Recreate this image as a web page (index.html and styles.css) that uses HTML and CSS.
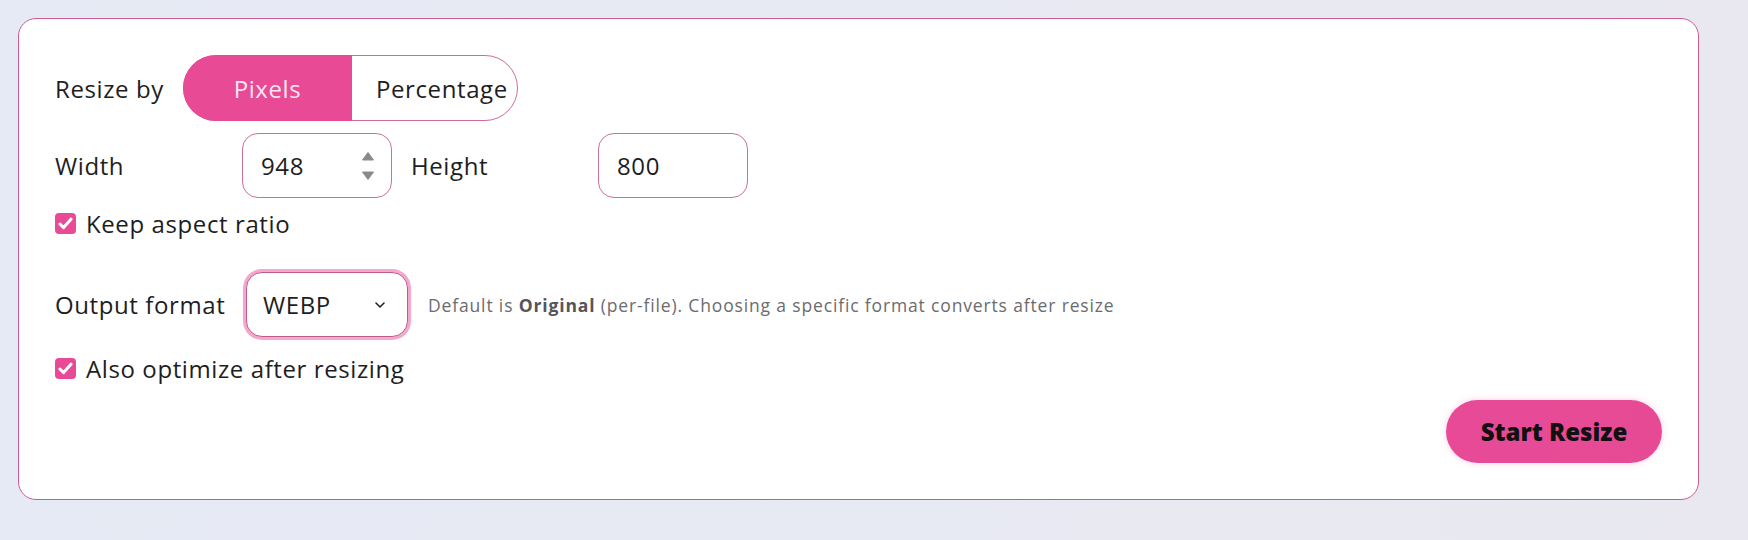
FILE: index.html
```html
<!DOCTYPE html>
<html lang="en">
<head>
    <meta charset="UTF-8">
    <meta name="viewport" content="width=device-width, initial-scale=1.0">
    <title>Resize</title>
    <link rel="stylesheet" href="styles.css">
</head>
<body>
    <div class="card">
        <div class="row">
            <span class="label label-short">Resize by</span>
            <div class="toggle">
                <button class="seg seg-active">Pixels</button>
                <button class="seg seg-pct">Percentage</button>
            </div>
        </div>

        <div class="row row-size">
            <label class="label" for="width">Width</label>
            <div class="field">
                <input type="text" id="width" value="948" />
                <svg class="spin" width="14" height="30" viewBox="0 0 14 30">
                    <path d="M7 1.5 L12.5 9 L1.5 9 Z" fill="#8a8a8a" stroke="#8a8a8a" stroke-linejoin="round" />
                    <path d="M1.5 21 L12.5 21 L7 28.5 Z" fill="#8a8a8a" stroke="#8a8a8a" stroke-linejoin="round" />
                </svg>
            </div>
            <label class="label" for="height">Height</label>
            <div class="field">
                <input type="text" id="height" value="800" />
            </div>
        </div>

        <label class="check check-first">
            <span class="box">
                <svg width="15" height="13" viewBox="0 0 15 13"><path d="M2 7 L5.6 10.6 L13 2.2" fill="none" stroke="#fff" stroke-width="3" stroke-linecap="round" stroke-linejoin="round" /></svg>
            </span>
            Keep aspect ratio
        </label>

        <div class="row row-format">
            <label class="label label-format" for="format">Output format</label>
            <div class="select-wrap">
                <select id="format">
                    <option>WEBP</option>
                </select>
                <svg class="chevron" width="12" height="8" viewBox="0 0 12 8"><path d="M2 2 L6 6 L10 2" fill="none" stroke="#222" stroke-width="1.6" stroke-linecap="round" stroke-linejoin="round" /></svg>
            </div>
            <span class="hint">Default is <b>Original</b> (per-file). Choosing a specific format converts after resize</span>
        </div>

        <label class="check check-second">
            <span class="box">
                <svg width="15" height="13" viewBox="0 0 15 13"><path d="M2 7 L5.6 10.6 L13 2.2" fill="none" stroke="#fff" stroke-width="3" stroke-linecap="round" stroke-linejoin="round" /></svg>
            </span>
            Also optimize after resizing
        </label>

        <div class="actions">
            <button class="start">Start Resize</button>
        </div>
    </div>
</body>
</html>
```

FILE: styles.css
```css
body {
    margin: 0;
    font-family: 'Open Sans', 'Liberation Sans', sans-serif;
    background: linear-gradient(90deg, #e6eaf4 0%, #e8e9f2 60%, #e9e8f0 100%);
    color: #1e1e22;
    height: 540px;
    overflow: hidden;
}

.card {
    width: 1681px;
    box-sizing: border-box;
    margin: 18px 0 0 18px;
    padding: 36px;
    background-color: #ffffff;
    border: 1px solid #cc5a95;
    border-radius: 18px;
}

.row {
    display: flex;
    align-items: center;
}

.label {
    font-size: 24px;
    letter-spacing: 0.6px;
    width: 168px;
    flex-shrink: 0;
}

.label-short {
    width: 128px;
}

/* segmented control */
.toggle {
    display: flex;
    height: 66px;
    border: 1px solid #cf6a9c;
    border-radius: 34px;
    box-sizing: border-box;
}

.seg {
    font-family: inherit;
    font-size: 24px;
    letter-spacing: 0.6px;
    border: none;
    background: #ffffff;
    color: #1e1e22;
    padding: 0;
    cursor: pointer;
}

.seg-active {
    width: 169px;
    background-color: #e84a95;
    color: #fde6f1;
    border-radius: 33px 0 0 33px;
    margin: -1px 0 -1px -1px;
}

.seg-pct {
    width: 165px;
    text-align: left;
    padding-left: 24px;
    white-space: nowrap;
    border-radius: 0 33px 33px 0;
    background: transparent;
}

.row-size {
    margin-top: 12px;
    gap: 19px;
}

.field {
    width: 150px;
    height: 65px;
    box-sizing: border-box;
    border: 1px solid #c7739b;
    border-radius: 16px;
    display: flex;
    align-items: center;
    padding: 0 16px 0 18px;
}

.field input {
    width: 80px;
    border: none;
    outline: none;
    font-family: inherit;
    font-size: 24px;
    letter-spacing: 0.6px;
    color: #1e1e22;
    padding: 0;
    background: transparent;
}

.spin {
    margin-left: auto;
}

/* checkboxes */
.check {
    display: flex;
    align-items: center;
    height: 36px;
    font-size: 24px;
    letter-spacing: 0.6px;
    gap: 10px;
}

.check-first {
    margin-top: 7px;
}

.check-second {
    margin-top: 13px;
}

.box {
    width: 21px;
    height: 21px;
    border-radius: 4px;
    background-color: #e84a95;
    display: flex;
    align-items: center;
    justify-content: center;
    flex-shrink: 0;
}

.row-format {
    margin-top: 31px;
    gap: 19px;
}

.label-format {
    width: 172px;
}

.select-wrap {
    position: relative;
}

.select-wrap select {
    appearance: none;
    width: 162px;
    height: 65px;
    box-sizing: border-box;
    border: 1px solid #c25b8d;
    border-radius: 16px;
    box-shadow: 0 0 0 3px #f3a9cb;
    padding: 0 0 0 16px;
    font-family: inherit;
    font-size: 24px;
    letter-spacing: 0.6px;
    color: #1e1e22;
    background: #ffffff;
    outline: none;
}

.chevron {
    position: absolute;
    right: 22px;
    top: 29px;
    pointer-events: none;
}

.hint {
    font-size: 17.5px;
    letter-spacing: 0.85px;
    color: #6b6b70;
    margin-left: 1px;
}

.hint b {
    font-weight: 700;
    color: #55555a;
}

.actions {
    display: flex;
    justify-content: flex-end;
    margin-top: 14px;
}

.start {
    width: 216px;
    height: 63px;
    border: none;
    border-radius: 32px;
    background: linear-gradient(90deg, #e84a97 0%, #e64a95 100%);
    box-shadow: 0 0 6px rgba(240, 110, 180, 0.35);
    font-family: inherit;
    font-size: 24px;
    font-weight: 800;
    color: #111111;
    cursor: pointer;
}
```
